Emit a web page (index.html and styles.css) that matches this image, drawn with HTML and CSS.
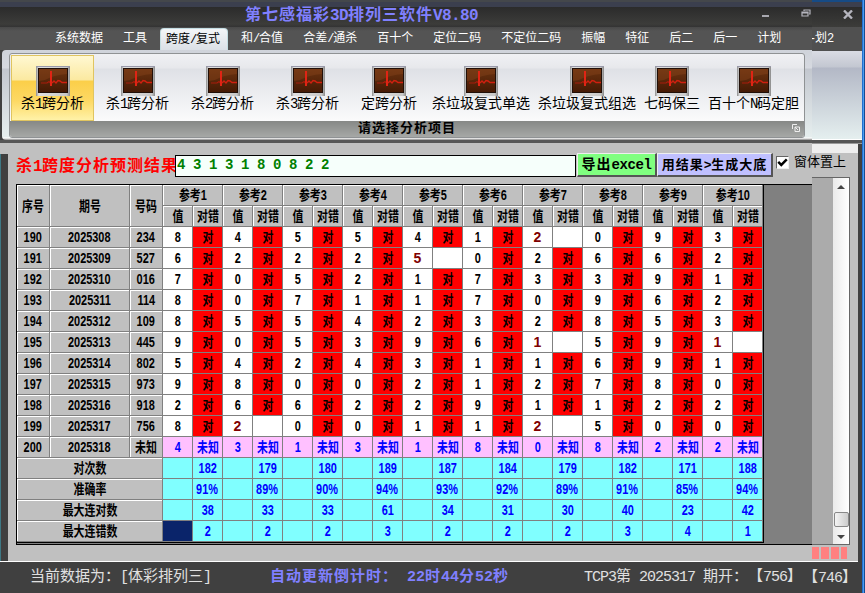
FILE: index.html
```html
<!DOCTYPE html>
<html lang="zh-CN">
<head>
<meta charset="utf-8">
<title>第七感福彩3D排列三软件</title>
<link rel="stylesheet" href="styles.css">
</head>
<body>
<svg class="defs" aria-hidden="true">
  <defs>
    <linearGradient id="frame" x1="0" y1="0" x2="1" y2="0"><stop offset="0" stop-color="#8d8d8d"/><stop offset=".08" stop-color="#e0e0e0"/><stop offset=".9" stop-color="#c8c8c8"/><stop offset="1" stop-color="#8a8a8a"/></linearGradient>
    <linearGradient id="screen" x1="0" y1="0" x2="0" y2="1"><stop offset="0" stop-color="#6b3310"/><stop offset="1" stop-color="#451a05"/></linearGradient>
    <symbol id="pulse" viewBox="0 0 34 30">
      <rect width="34" height="30" fill="url(#frame)"/>
      <rect x="0" y="0" width="34" height="1" fill="#99a"/>
      <rect x="2" y="2" width="30" height="25" fill="#211009"/>
      <rect x="3" y="3" width="28" height="23" fill="url(#screen)"/>
      <path d="M3 3H31V8Q18 9 9 14L3 15Z" fill="#84431a" opacity=".45"/>
      <path d="M5 17H11L13 15.500L14.500 17" fill="none" stroke="#a81c0c" stroke-width="1.2"/>
      <path d="M15 5V20" fill="none" stroke="#e02414" stroke-width="2"/>
      <path d="M16 17L18 15L20 17L22 14.500L24 15L26 16.500H31" fill="none" stroke="#d02010" stroke-width="1.4"/>
    </symbol>
  </defs>
</svg>
<div class="window">
  <div class="left">
    <header class="title">
      <h1>第七感福彩<span class="h">3D</span>排列三软件<span class="h">V8.80</span></h1>
      <span class="min"></span>
      <svg class="restore" viewBox="0 0 10 8"><path d="M3 2V1H9V5H8M1 3H7V7H1ZM1 4H7" fill="none" stroke="#b5b5be" stroke-width="1.2"/></svg>
    </header>
    <nav class="menu">
      <a>系统数据</a><a>工具</a><a class="active">跨度<span class="h">/</span>复式</a><a>和<span class="h">/</span>合值</a><a>合差<span class="h">/</span>通杀</a><a>百十个</a><a>定位二码</a><a>不定位二码</a><a>振幅</a><a>特征</a><a>后二</a><a>后一</a><a>计划</a>
    </nav>
    <section class="ribbon">
      <div class="group">
        <div class="tools">
          <div class="tool on"><svg><use href="#pulse"/></svg><span>杀<i class="h">1</i>跨分析</span></div>
          <div class="tool"><svg><use href="#pulse"/></svg><span>杀<i class="h">1</i>跨分析</span></div>
          <div class="tool"><svg><use href="#pulse"/></svg><span>杀<i class="h">2</i>跨分析</span></div>
          <div class="tool"><svg><use href="#pulse"/></svg><span>杀<i class="h">3</i>跨分析</span></div>
          <div class="tool mid"><svg><use href="#pulse"/></svg><span>定跨分析</span></div>
          <div class="tool tight"><svg><use href="#pulse"/></svg><span>杀垃圾复式单选</span></div>
          <div class="tool tight"><svg><use href="#pulse"/></svg><span>杀垃圾复式组选</span></div>
          <div class="tool tight"><svg><use href="#pulse"/></svg><span>七码保三</span></div>
          <div class="tool tight"><svg><use href="#pulse"/></svg><span>百十个<i class="h">N</i>码定胆</span></div>
        </div>
        <div class="caption"><b>请选择分析项目</b>
          <svg class="launch" viewBox="0 0 8 8"><path d="M.5 5V.5H5M3 3H7.5V7.5H3ZM3 3L6 6" fill="none" stroke="#eee"/></svg>
        </div>
      </div>
    </section>
    <div class="rule"></div>
    <main class="panel">
      <div class="edge"></div>
      <div class="content">
        <div class="bar">
          <b class="label">杀<span class="h">1</span>跨度分析预测结果</b>
          <div class="field">4 3 1 3 1 8 0 8 2 2</div>
          <button class="btn green">导出<span class="h">excel</span></button>
          <button class="btn blue">用结果<span class="h">&gt;</span>生成大底</button>
          <span class="check"><svg viewBox="0 0 9 9"><path d="M1 4L3.5 6.5L8 2" fill="none" stroke="#000" stroke-width="2"/></svg></span>
          <span class="pin">窗体置上</span>
        </div>
        <div class="sheet">
          <div class="grid" id="grid"></div>
        </div>
      </div>
    </main>
  </div>
  <aside class="right">
    <div class="r-title"><svg viewBox="0 0 10 9"><path d="M1 .5L9 8.5M9 .5L1 8.5" stroke="#b5b5be" stroke-width="2.4"/></svg></div>
    <div class="r-menu"><span class="h">-</span>划<span class="h">2</span></div>
    <div class="r-ribbon"></div>
    <div class="r-rule"></div>
    <div class="r-white"></div>
    <div class="r-gap"></div>
    <div class="r-scroll">
      <div class="track"><i class="up"></i><span class="thumb"></span><i class="down"></i></div>
    </div>
    <div class="blocks"><i></i><i></i><i></i><i></i></div>
  </aside>
  <footer class="status">
    <span class="s1">当前数据为：<span class="h">[</span>体彩排列三<span class="h">]</span></span>
    <b class="s2">自动更新倒计时：<span class="h">&nbsp;22</span>时<span class="h">44</span>分<span class="h">52</span>秒</b>
    <span class="s3"><span class="h">TCP3</span>第<span class="h">&nbsp;2025317&nbsp;</span>期开：【<span class="h">756</span>】</span>
    <span class="s4">【<span class="h">746</span>】</span>
  </footer>
</div>
<script src="table.js"></script>
</body>
</html>
```
FILE: styles.css
```css
* { box-sizing: border-box; }
body { margin: 0; overflow: hidden; font-family: "Noto Sans CJK SC", sans-serif; text-spacing-trim: space-all; }
.defs { position: absolute; width: 0; height: 0; }
.h { font-family: "Liberation Mono", monospace; font-style: normal; letter-spacing: -.1em; }
.window {
  width: 865px; height: 593px; background: #404040;
  display: grid; grid-template-columns: 812px 53px; grid-template-rows: 562px 31px;
}
.left { position: relative; z-index: 1; display: flex; flex-direction: column; white-space: nowrap; }

.title {
  height: 27px; display: flex; align-items: flex-start; padding-left: 245px;
  background: linear-gradient(#44474b 0 2px, #3b3f4e 2px 7px, #2b2b2b 7px, #3c3c3a 24px, #333 27px);
}
.title h1 { margin: 2px -4px 0 0; width: 521px; font: bold 16px/22px "Noto Sans CJK SC", sans-serif; letter-spacing: 1px; color: #8080ff; flex: none; }
.title h1 .h { letter-spacing: -.6px; }
.min { width: 7px; height: 2px; margin: 15px 0 0; background: #a8a8b0; }
.restore { width: 10px; height: 8px; margin: 9px 0 0 32px; }

.menu {
  height: 23px; display: flex; gap: 8px; padding-left: 49px; background: linear-gradient(#484848, #545454 4px);
  font-size: 12px; line-height: 19px; color: #fff;
}
.menu a { padding: 0 6px; }
.menu .active {
  color: #000; margin: 1px -1px 0 -1px; padding: 0 7px 0 5px; line-height: 17px; border-radius: 4px 4px 0 0;
  background: linear-gradient(#f4f6f8, #dbe0e6); border: 1px solid #c4dde2; border-bottom: 0;
}

.ribbon {
  height: 90px; padding: 3px 8px 0 8px; margin-left: 2px; border-radius: 4px 0 0 4px;
  background: linear-gradient(#cfd3da, #d6d9e0 18px, #c3c7cf 19px, #e6eeee 87px, #fff 88px, #888 90px);
}
.group { width: 796px; height: 85px; border: 1px solid #8f9294; border-radius: 3px; background: linear-gradient(#f0f1f4, #e7e8ec 14px, #dfe1e6 15px, #fbfbfc 68px); display: flex; flex-direction: column; margin-left: -1px; overflow: hidden; }
.tools { height: 68px; display: flex; padding: 1px 0 0 1px; }
.tool { height: 66px; width: 83px; margin-right: 2px; flex: none; display: flex; flex-direction: column; align-items: center; padding-top: 11px; font-size: 14px; }
.tool svg { width: 34px; height: 30px; flex: none; }
.tool span { line-height: 20px; margin-top: -4px; }
.tool.on { border: 1px solid #e0c560; padding-top: 10px; background: linear-gradient(#fff8d2, #fbe9a0 24px, #fbcf49 25px, #fdd964 45px, #fff2a8); }
.tool.mid { width: 76px; margin-right: 5px; }
.tool.tight { width: auto; margin-right: 8px; }
.caption { height: 16px; background: linear-gradient(#868886, #a6a8a6); text-align: center; position: relative; }
.caption b { display: block; font-size: 13px; line-height: 13px; letter-spacing: 1px; margin-top: -1px; }
.launch { position: absolute; right: 4px; top: 3px; width: 8px; height: 8px; }
.rule { height: 3px; background: #575757; }

.panel { flex: 1; display: flex; background: #c0c0c0; border-bottom: 1px solid #fff; }
.edge { width: 8px; margin-top: 11px; background: #404040; border-left: 1px solid #3d7884; }
.content { flex: 1; padding: 10px 0 0 8px; min-width: 0; }
.bar { height: 24px; display: flex; align-items: flex-start; }
.bar > * { flex: none; }
.label { width: 159px; font-size: 16px; line-height: 22px; letter-spacing: 1px; color: #f00; }
.label .h { letter-spacing: -.6px; }
.field { width: 401px; height: 22px; margin: 2px 1px 0 0; border: 1px solid #000; background: #f6fffb; color: #008000; font: bold 14px/18px "Liberation Mono", monospace; letter-spacing: -.4px; padding-left: 1px; position: relative; }
.btn { height: 24px; padding: 0; border: 1px solid; border-color: #eee #555 #555 #eee; border-right-width: 2px; border-bottom-width: 2px; font: bold 14px/19px "Noto Sans CJK SC", sans-serif; letter-spacing: 1px; white-space: nowrap; color: #000; }
.btn .h { letter-spacing: -.4px; }
.green { width: 80px; background: #80ff80; }
.blue { width: 116px; background: #c0c0ff; font-size: 13px; }
.bar .check { width: 13px; height: 13px; margin: 3px 5px 0 3px; background: #fff; border: 1px solid; border-color: #666 #eee #eee #666; display: flex; }
.check svg { width: 11px; height: 11px; }
.pin { font-size: 13px; line-height: 16px; }

.sheet { height: 361px; margin-top: 7px; background: #808080; border-top: 1px solid #000; border-bottom: 1px solid #000; border-left: 1px solid #000; }
.grid { width: 747px; height: 358px; border-right: 1px solid #000; border-bottom: 1px solid #000; display: grid; grid-template-columns: 33px 80px 33px repeat(20, 30px); grid-auto-rows: 21px; font: bold 14px/19px "Liberation Sans", "Noto Sans CJK SC", sans-serif; }
.c { border-right: 1px solid #808080; border-bottom: 1px solid #808080; display: flex; align-items: center; justify-content: center; min-width: 0; background: #fff; }
.c span { transform: scaleX(.78); flex: none; line-height: 20px; }
.c.head { background: #c0c0c0; box-shadow: inset 1px 1px #fff; }
.c.two { grid-row: span 2; }
.c.wide { grid-column: span 2; }
.c.sum { grid-column: span 3; }
.c.hit { background: #f00; }
.c.miss { color: #800000; }
.c.miss span { transform: none; }
.c.next { background: #ffc0ff; color: #00f; }
.c.stat { background: #80ffff; color: #00f; }
.c.picked { background: #0a246a; }

.right { background: linear-gradient(90deg, transparent 46px, #404040 46px 50px, #2270d0 50px 51px, #4a9df0 51px 52px, #174a90 52px), #c0c0c0; display: flex; flex-direction: column; }
.right > * { width: 46px; flex: none; }
.right > .r-title { height: 27px; width: 50px; background: linear-gradient(#164b86 0 2px, #3b3f4e 2px 7px, #2b2b2b 7px, #3c3c3a); padding: 10px 0 0 31px; }
.r-title svg { width: 10px; height: 9px; display: block; }
.right > .r-menu { height: 24px; width: 50px; background: #505050; color: #fff; font-size: 12px; line-height: 20px; text-indent: -3px; overflow: hidden; }
.right > .r-ribbon { height: 88px; width: 50px; background: linear-gradient(#dadce4, #c3c7d1 16px, #b3b8c6 17px, #e5efef); }
.right > .r-rule { height: 5px; width: 50px; background: linear-gradient(#fff 0 1px, #555 1px 4px, #999 4px); }
.r-white { height: 9px; background: #eee; }
.r-gap { height: 24px; }
.right > .r-scroll { height: 368px; width: 38px; background: #ababab; border: solid #666; border-width: 1px 1px 1px 0; padding-left: 21px; }
.track { width: 16px; height: 366px; background: linear-gradient(90deg, #eaeaea, #fff); display: flex; flex-direction: column; align-items: center; }
.up, .down { width: 0; height: 0; border: 4px solid transparent; }
.up { border-bottom: 4px solid #444; border-top: 0; margin-top: 7px; }
.thumb { width: 15px; height: 15px; margin-top: auto; border: 1px solid #888; border-radius: 2px; background: linear-gradient(90deg, #f4f4f4, #ccc); }
.down { border-top: 4px solid #444; border-bottom: 0; margin: 8px 0 5px; }
.blocks { height: 17px; display: flex; gap: 2px; padding: 2px 0; border-bottom: 1px solid #fff; }
.blocks i { width: 8px; background: #ff8080; }
.blocks i:first-child { width: 7px; }
.blocks i:last-child { width: 6px; }

.status { grid-column: 1 / 3; display: flex; white-space: nowrap; font-size: 15px; line-height: 26px; color: #e0e0e0; background: linear-gradient(90deg, transparent 862px, #2270d0 862px 863px, #4a9df0 863px 864px, #174a90 864px); padding-left: 30px; }
.status .h { letter-spacing: -1px; }
.s1 { width: 240px; }
.s2 { width: 314px; color: #8080ff; letter-spacing: 1px; }
.status .s2 .h { letter-spacing: 0; }
.s3 { width: 219px; }
.s4 { line-height: 27px; }
```
FILE: table.js
```js
// Each record: sequence, issue, number, one value per reference.
const rows = [
  ["190", "2025308", "234", "8455412093"],
  ["191", "2025309", "527", "6222502662"],
  ["192", "2025310", "016", "7052173391"],
  ["193", "2025311", "114", "8071170962"],
  ["194", "2025312", "109", "8554232853"],
  ["195", "2025313", "445", "9053961591"],
  ["196", "2025314", "802", "5424311691"],
  ["197", "2025315", "973", "9800212780"],
  ["198", "2025316", "918", "2662291122"],
  ["199", "2025317", "756", "8200112500"]
];
// Columns where the reference digit was wrong, by sequence.
const misses = { 190: [6], 191: [4], 195: [6, 9], 199: [1, 6] };
const stats = [
  ["对次数", "182 179 180 189 187 184 179 182 171 188"],
  ["准确率", "91% 89% 90% 94% 93% 92% 89% 91% 85% 94%"],
  ["最大连对数", "38 33 33 61 34 31 30 40 23 42"],
  ["最大连错数", "2 2 2 3 2 2 2 3 4 1"]
];
const grid = document.getElementById("grid");
function cell(text, kind) {
  const el = document.createElement("div");
  el.className = "c " + (kind || "");
  if (text) {
    const label = document.createElement("span");
    label.textContent = text;
    el.append(label);
  }
  grid.append(el);
}
["序号", "期号", "号码"].forEach(t => cell(t, "head two"));
for (let i = 1; i <= 10; i++) cell("参考" + i, "head wide");
for (let i = 0; i < 10; i++) { cell("值", "head"); cell("对错", "head"); }
rows.forEach(([seq, issue, number, values]) => {
  [seq, issue, number].forEach(t => cell(t, "head"));
  [...values].forEach((v, i) => {
    const miss = (misses[seq] || []).includes(i);
    cell(v, miss ? "miss" : "");
    cell(miss ? "" : "对", miss ? "" : "hit");
  });
});
["200", "2025318", "未知"].forEach(t => cell(t, "head"));
[..."4313180822"].forEach(v => { cell(v, "next"); cell("未知", "next"); });
stats.forEach(([name, values], r) => {
  cell(name, "head sum");
  values.split(" ").forEach((v, i) => {
    cell("", r === 3 && i === 0 ? "picked" : "stat");
    cell(v, "stat");
  });
});
```
